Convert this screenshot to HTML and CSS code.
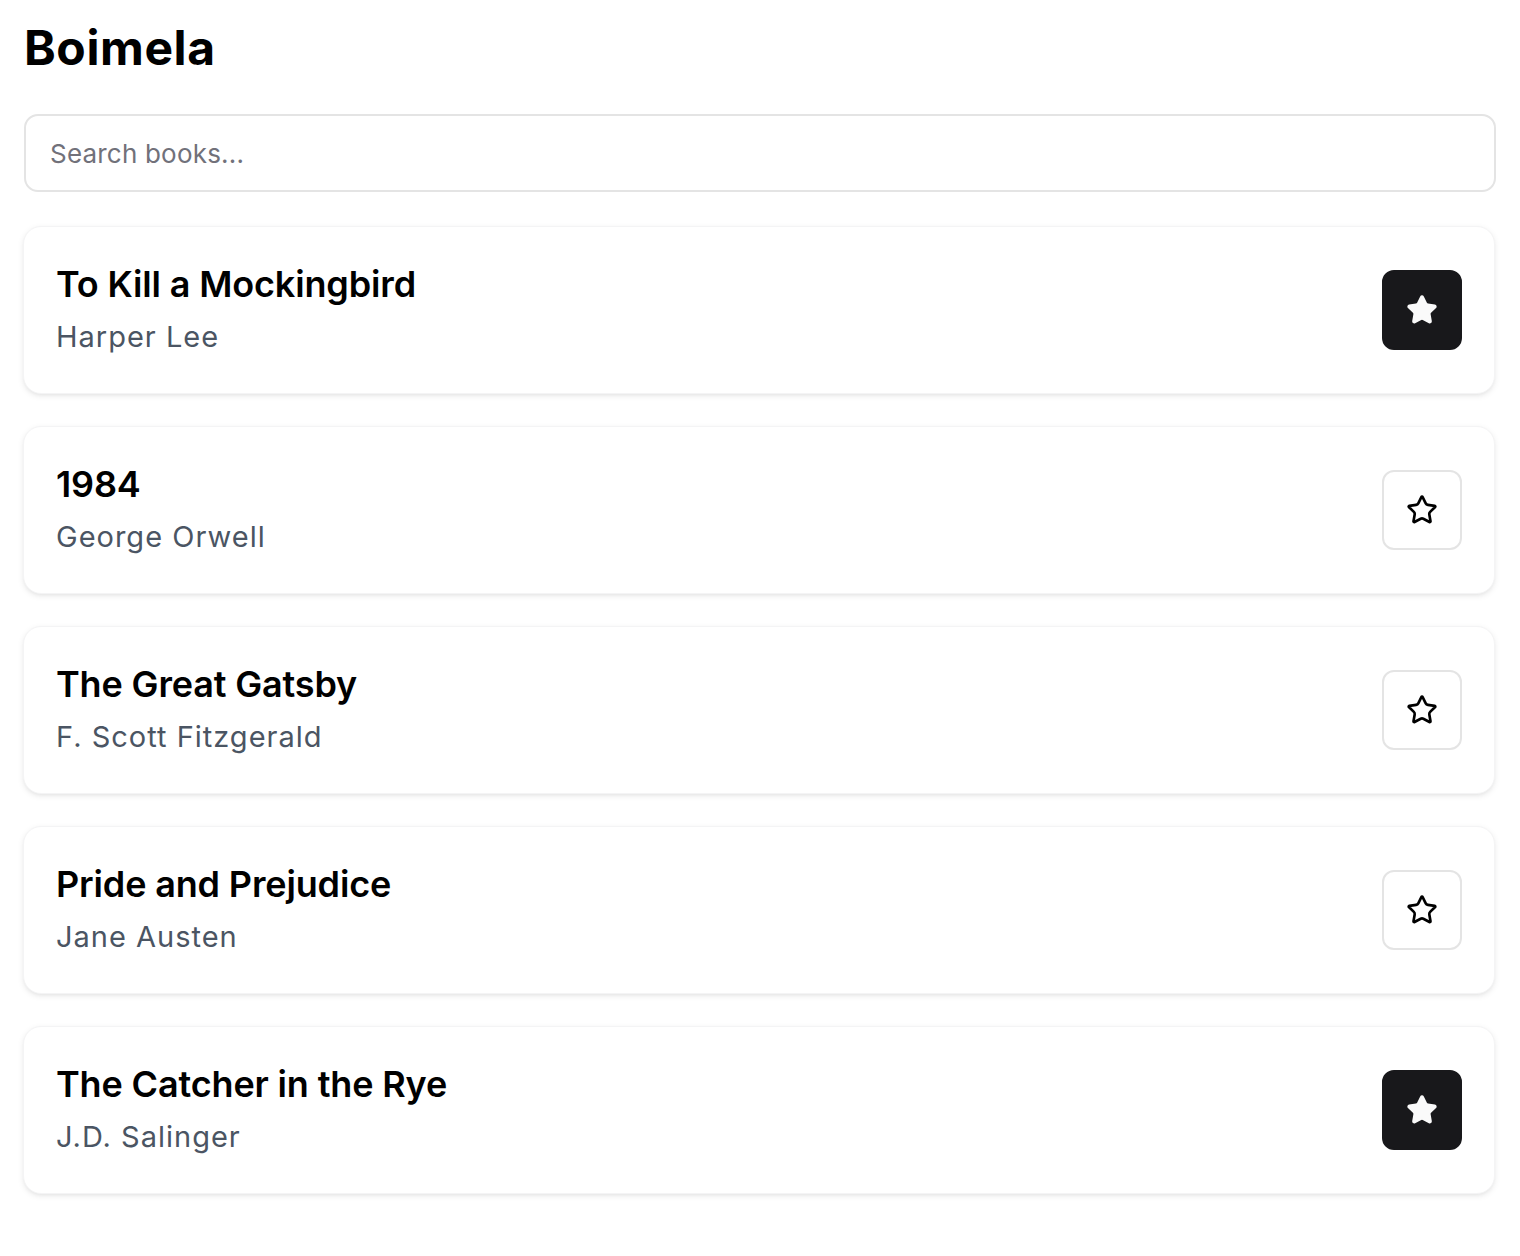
FILE: index.html
```html
<!DOCTYPE html>
<html lang="en">
<head>
<meta charset="utf-8">
<title>Boimela</title>
<link rel="stylesheet" href="styles.css">
</head>
<body>
<main class="page">
  <h1 class="title">Boimela</h1>
  <input class="search" type="text" placeholder="Search books...">
  <ul class="list">
    <li class="card">
      <div class="info"><h2 class="book">To Kill a Mockingbird</h2><p class="author">Harper Lee</p></div>
      <button class="fav on" aria-label="Unfavorite"><svg viewBox="0 0 24 24" width="32" height="32"><path d="M11.525 2.295a.53.53 0 0 1 .95 0l2.31 4.679a2.123 2.123 0 0 0 1.595 1.16l5.166.756a.53.53 0 0 1 .294.904l-3.736 3.638a2.123 2.123 0 0 0-.611 1.878l.882 5.14a.53.53 0 0 1-.771.56l-4.618-2.428a2.122 2.122 0 0 0-1.973 0L6.396 21.01a.53.53 0 0 1-.77-.56l.881-5.139a2.122 2.122 0 0 0-.611-1.879L2.16 9.795a.53.53 0 0 1 .294-.906l5.165-.755a2.122 2.122 0 0 0 1.597-1.16z"/></svg></button>
    </li>
    <li class="card">
      <div class="info"><h2 class="book">1984</h2><p class="author">George Orwell</p></div>
      <button class="fav" aria-label="Favorite"><svg viewBox="0 0 24 24" width="32" height="32"><path d="M11.525 2.295a.53.53 0 0 1 .95 0l2.31 4.679a2.123 2.123 0 0 0 1.595 1.16l5.166.756a.53.53 0 0 1 .294.904l-3.736 3.638a2.123 2.123 0 0 0-.611 1.878l.882 5.14a.53.53 0 0 1-.771.56l-4.618-2.428a2.122 2.122 0 0 0-1.973 0L6.396 21.01a.53.53 0 0 1-.77-.56l.881-5.139a2.122 2.122 0 0 0-.611-1.879L2.16 9.795a.53.53 0 0 1 .294-.906l5.165-.755a2.122 2.122 0 0 0 1.597-1.16z"/></svg></button>
    </li>
    <li class="card">
      <div class="info"><h2 class="book">The Great Gatsby</h2><p class="author">F. Scott Fitzgerald</p></div>
      <button class="fav" aria-label="Favorite"><svg viewBox="0 0 24 24" width="32" height="32"><path d="M11.525 2.295a.53.53 0 0 1 .95 0l2.31 4.679a2.123 2.123 0 0 0 1.595 1.16l5.166.756a.53.53 0 0 1 .294.904l-3.736 3.638a2.123 2.123 0 0 0-.611 1.878l.882 5.14a.53.53 0 0 1-.771.56l-4.618-2.428a2.122 2.122 0 0 0-1.973 0L6.396 21.01a.53.53 0 0 1-.77-.56l.881-5.139a2.122 2.122 0 0 0-.611-1.879L2.16 9.795a.53.53 0 0 1 .294-.906l5.165-.755a2.122 2.122 0 0 0 1.597-1.16z"/></svg></button>
    </li>
    <li class="card">
      <div class="info"><h2 class="book">Pride and Prejudice</h2><p class="author">Jane Austen</p></div>
      <button class="fav" aria-label="Favorite"><svg viewBox="0 0 24 24" width="32" height="32"><path d="M11.525 2.295a.53.53 0 0 1 .95 0l2.31 4.679a2.123 2.123 0 0 0 1.595 1.16l5.166.756a.53.53 0 0 1 .294.904l-3.736 3.638a2.123 2.123 0 0 0-.611 1.878l.882 5.14a.53.53 0 0 1-.771.56l-4.618-2.428a2.122 2.122 0 0 0-1.973 0L6.396 21.01a.53.53 0 0 1-.77-.56l.881-5.139a2.122 2.122 0 0 0-.611-1.879L2.16 9.795a.53.53 0 0 1 .294-.906l5.165-.755a2.122 2.122 0 0 0 1.597-1.16z"/></svg></button>
    </li>
    <li class="card">
      <div class="info"><h2 class="book">The Catcher in the Rye</h2><p class="author">J.D. Salinger</p></div>
      <button class="fav on" aria-label="Unfavorite"><svg viewBox="0 0 24 24" width="32" height="32"><path d="M11.525 2.295a.53.53 0 0 1 .95 0l2.31 4.679a2.123 2.123 0 0 0 1.595 1.16l5.166.756a.53.53 0 0 1 .294.904l-3.736 3.638a2.123 2.123 0 0 0-.611 1.878l.882 5.14a.53.53 0 0 1-.771.56l-4.618-2.428a2.122 2.122 0 0 0-1.973 0L6.396 21.01a.53.53 0 0 1-.77-.56l.881-5.139a2.122 2.122 0 0 0-.611-1.879L2.16 9.795a.53.53 0 0 1 .294-.906l5.165-.755a2.122 2.122 0 0 0 1.597-1.16z"/></svg></button>
    </li>
  </ul>
</main>
</body>
</html>
```

FILE: styles.css
```css
* { box-sizing: border-box; }
html, body { margin: 0; background: #ffffff; }
body {
  font-family: Inter, "Noto Sans", "Liberation Sans", sans-serif;
  color: #000;
}
.page {
  padding: 24px 25px 24px 23px;
  display: flex;
  flex-direction: column;
}
.title {
  margin: 0 0 42px 1px;
  font-size: 48px;
  line-height: 48px;
  font-weight: 700;
  letter-spacing: 0.6px;
}
.search {
  width: 100%;
  height: 78px;
  border: 2px solid #e4e4e4;
  border-radius: 14px;
  padding: 0 24px;
  font-family: inherit;
  font-size: 26px;
  letter-spacing: 0.2px;
  color: #111;
  outline: none;
  margin: 0 0 34px 1px;
}
.search::placeholder { color: #71717a; }
.list {
  list-style: none;
  margin: 0;
  padding: 0;
  display: flex;
  flex-direction: column;
  gap: 32px;
}
.card {
  display: flex;
  align-items: center;
  justify-content: space-between;
  padding: 32px;
  border-radius: 18px;
  background: #fff;
  border: 1px solid #f4f4f5;
  box-shadow: 0 2px 6px rgba(0,0,0,0.08), 0 2px 4px -2px rgba(0,0,0,0.07);
}
.book {
  margin: 0 0 8px 0;
  font-size: 36px;
  line-height: 50px;
  font-weight: 600;
  letter-spacing: -0.15px;
}
.author {
  margin: 0 0 4px 0;
  font-size: 29px;
  line-height: 40px;
  letter-spacing: 1px;
  color: #4b5563;
}
.fav {
  width: 80px;
  height: 80px;
  flex: none;
  display: flex;
  align-items: center;
  justify-content: center;
  border-radius: 12px;
  border: 2px solid #e4e4e4;
  background: #fff;
  padding: 0;
}
.fav svg { fill: none; stroke: #000; stroke-width: 2; stroke-linecap: round; stroke-linejoin: round; }
.fav.on { background: #18181b; border-color: #18181b; }
.fav.on svg { fill: #fafafa; stroke: #fafafa; }
```
